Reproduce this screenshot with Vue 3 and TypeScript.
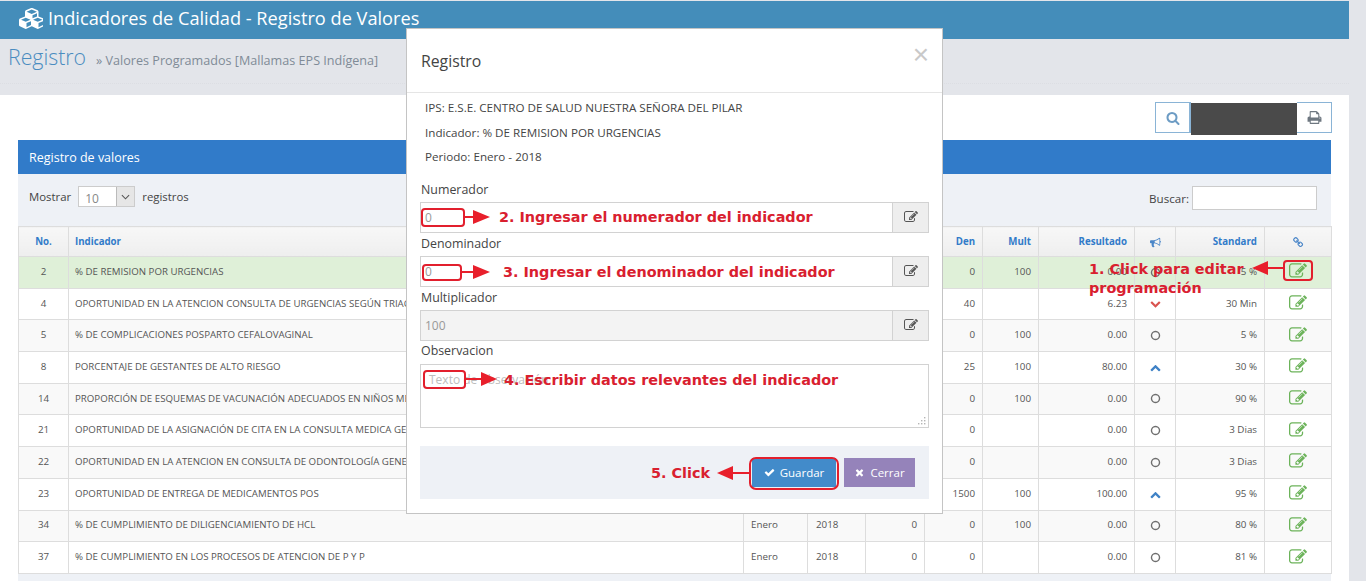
<script setup lang="ts">
interface Row {
  no: number
  name: string
  num: string
  den: string
  mult: string
  res: string
  status: 'circle' | 'up' | 'down'
  std: string
}

const paths = {
  edit: 'M888 1184l116-116-152-152-116 116v56h96v96h56zm440-720q-16-16-33 1l-350 350q-17 17-1 33t33-1l350-350q17-17 1-33zm80 594v190q0 119-84.500 203.500t-203.500 84.500h-832q-119 0-203.500-84.500t-84.500-203.500v-832q0-119 84.500-203.500t203.500-84.500h832q63 0 117 25 15 7 18 23 3 17-9 29l-49 49q-14 14-32 8-23-6-45-6h-832q-66 0-113 47t-47 113v832q0 66 47 113t113 47h832q66 0 113-47t47-113v-126q0-13 9-22l64-64q15-15 35-7t20 29zm-96-738l288 288-672 672h-288v-288zm444 132l-92 92-288-288 92-92q28-28 68-28t68 28l152 152q28 28 28 68t-28 68z',
  search: 'M1216 832q0-185-131.500-316.500t-316.500-131.500-316.500 131.500-131.500 316.500 131.500 316.500 316.500 131.500 316.500-131.500 131.500-316.500zm512 832q0 52-38 90t-90 38q-54 0-90-38l-343-342q-179 124-399 124-143 0-273.500-55.500t-225-150-150-225-55.500-273.500 55.500-273.500 150-225 225-150 273.500-55.500 273.500 55.500 225 150 150 225 55.500 273.500q0 220-124 399l343 343q37 37 37 90z',
  print: 'M448 1536h896v-256h-896v256zm0-640h896v-384h-160q-40 0-68-28t-28-68v-160h-640v640zm1152 64q0-26-19-45t-45-19-45 19-19 45 19 45 45 19 45-19 19-45zm128 0v416q0 13-9.500 22.500t-22.500 9.500h-224v160q0 40-28 68t-68 28h-960q-40 0-68-28t-28-68v-160h-224q-13 0-22.500-9.500t-9.500-22.500v-416q0-79 56.500-135.500t135.500-56.500h64v-544q0-40 28-68t68-28h672q40 0 88 20t76 48l152 152q28 28 48 76t20 88v256h64q79 0 135.500 56.500t56.500 135.500z',
  check: 'M1671 566q0 40-28 68l-724 724-136 136q-28 28-68 28t-68-28l-136-136-362-362q-28-28-28-68t28-68l136-136q28-28 68-28t68 28l294 295 656-657q28-28 68-28t68 28l136 136q28 28 28 68z',
  times: 'M1490 1322q0 40-28 68l-136 136q-28 28-68 28t-68-28l-294-294-294 294q-28 28-68 28t-68-28l-136-136q-28-28-28-68t28-68l294-294-294-294q-28-28-28-68t28-68l136-136q28-28 68-28t68 28l294 294 294-294q28-28 68-28t68 28l136 136q28 28 28 68t-28 68l-294 294 294 294q28 28 28 68z',
  up: 'M1683 1331l-166 165q-19 19-45 19t-45-19l-531-531-531 531q-19 19-45 19t-45-19l-166-165q-19-19-19-45.500t19-45.500l742-741q19-19 45-19t45 19l742 741q19 19 19 45.500t-19 45.500z',
  down: 'M1683 808l-742 741q-19 19-45 19t-45-19l-742-741q-19-19-19-45.500t19-45.500l166-165q19-19 45-19t45 19l531 531 531-531q19-19 45-19t45 19l166 165q19 19 19 45.500t-19 45.500z',
  circle: 'M896 352q-148 0-273 73t-198 198-73 273 73 273 198 198 273 73 273-73 198-198 73-273-73-273-198-198-273-73zm768 544q0 209-103 385.500t-279.500 279.500-385.500 103-385.500-103-279.500-279.500-103-385.500 103-385.500 279.500-279.500 385.500-103 385.500 103 279.500 279.500 103 385.500z',
  bullhorn: 'M1664 640q53 0 90.500 37.500t37.500 90.500-37.500 90.500-90.500 37.500v384q0 52-38 90t-90 38q-417-347-812-380-58 19-91 66t-31 100.500 40 92.500q-20 33-23 65.500t6 58 33.500 55 48 50 61.500 50.500q-29 58-111.500 83t-168.500 11.500-132-55.500q-7-23-29.500-87.500t-32-94.500-23-89-15-101 3.500-98.500 22-110.500h-122q-66 0-113-47t-47-113v-192q0-66 47-113t113-47h480q435 0 896-384 52 0 90 38t38 90v384zm-128 604v-954q-394 302-768 343v270q377 42 768 341z',
  link: 'M1456 1216q0-40-28-68l-208-208q-28-28-68-28-42 0-72 32 3 3 19 18.500t21.500 21.500 15 19 13 25.500 3.500 27.500q0 40-28 68t-68 28q-15 0-27.500-3.500t-25.500-13-19-15-21.500-21.500-18.500-19q-33 31-33 73 0 40 28 68l206 207q27 27 68 27 40 0 68-26l147-146q28-28 28-67zm-703-705q0-40-28-68l-206-207q-28-28-68-28-39 0-68 27l-147 146q-28 28-28 67 0 40 28 68l208 208q27 27 68 27 42 0 72-31-3-3-19-18.500t-21.500-21.500-15-19-13-25.500-3.500-27.500q0-40 28-68t68-28q15 0 27.500 3.500t25.500 13 19 15 21.500 21.500 18.500 19q33-31 33-73zm895 705q0 120-85 203l-147 146q-83 83-203 83-121 0-204-85l-206-207q-83-83-83-203 0-123 88-209l-88-88q-86 88-208 88-120 0-204-84l-208-208q-84-84-84-204t85-203l147-146q83-83 203-83 121 0 204 85l206 207q83 83 83 203 0 123-88 209l88 88q86-88 208-88 120 0 204 84l208 208q84 84 84 204z',
  cubes: 'M640 1632l384-192v-314l-384 164v342zm-64-454l404-173-404-173-404 173zm1088 454l384-192v-314l-384 164v342zm-64-454l404-173-404-173-404 173zm-448-293l384-165v-266l-384 164v267zm-64-379l441-189-441-189-441 189zm1088 518v416q0 36-19 67t-52 47l-448 224q-25 14-57 14t-57-14l-448-224q-4-2-7-4-2 2-7 4l-448 224q-25 14-57 14t-57-14l-448-224q-33-16-52-47t-19-67v-416q0-38 21.500-70t56.500-48l434-186v-400q0-38 21.500-70t56.500-48l448-192q23-10 50-10t50 10l448 192q35 16 56.500 48t21.500 70v400l434 186q36 16 57 48t21 70z'
}

const rows: Row[] = [
  { no: 2, name: '% DE REMISION POR URGENCIAS', num: '0', den: '0', mult: '100', res: '0.00', status: 'circle', std: '5 %' },
  { no: 4, name: 'OPORTUNIDAD EN LA ATENCION CONSULTA DE URGENCIAS SEGÚN TRIAGE', num: '249', den: '40', mult: '', res: '6.23', status: 'down', std: '30 Min' },
  { no: 5, name: '% DE COMPLICACIONES POSPARTO CEFALOVAGINAL', num: '0', den: '0', mult: '100', res: '0.00', status: 'circle', std: '5 %' },
  { no: 8, name: 'PORCENTAJE DE GESTANTES DE ALTO RIESGO', num: '20', den: '25', mult: '100', res: '80.00', status: 'up', std: '30 %' },
  { no: 14, name: 'PROPORCIÓN DE ESQUEMAS DE VACUNACIÓN ADECUADOS EN NIÑOS MENORES', num: '0', den: '0', mult: '100', res: '0.00', status: 'circle', std: '90 %' },
  { no: 21, name: 'OPORTUNIDAD DE LA ASIGNACIÓN DE CITA EN LA CONSULTA MEDICA GENERAL', num: '0', den: '0', mult: '', res: '0.00', status: 'circle', std: '3 Dias' },
  { no: 22, name: 'OPORTUNIDAD EN LA ATENCION EN CONSULTA DE ODONTOLOGÍA GENERAL', num: '0', den: '0', mult: '', res: '0.00', status: 'circle', std: '3 Dias' },
  { no: 23, name: 'OPORTUNIDAD DE ENTREGA DE MEDICAMENTOS POS', num: '1500', den: '1500', mult: '100', res: '100.00', status: 'up', std: '95 %' },
  { no: 34, name: '% DE CUMPLIMIENTO DE DILIGENCIAMIENTO DE HCL', num: '0', den: '0', mult: '100', res: '0.00', status: 'circle', std: '80 %' },
  { no: 37, name: '% DE CUMPLIMIENTO EN LOS PROCESOS DE ATENCION DE P Y P', num: '0', den: '0', mult: '', res: '0.00', status: 'circle', std: '81 %' }
]
</script>

<template>
  <div class="page">
    <div class="main">
      <header class="topbar">
        <svg class="cubes" viewBox="0 0 2048 1792"><path :d="paths.cubes" /></svg>
        <span>Indicadores de Calidad - Registro de Valores</span>
      </header>
      <div class="band">
        <div class="band-inner">
          <h1>Registro</h1>
          <span class="crumb">» Valores Programados [Mallamas EPS Indígena]</span>
        </div>
      </div>
      <section class="content">
        <div class="toolbar">
          <span class="tool tool-search"><svg viewBox="0 0 1792 1792"><path :d="paths.search" /></svg></span>
          <span class="tool-mask"></span>
          <span class="tool tool-print"><svg viewBox="0 0 1792 1792"><path :d="paths.print" /></svg></span>
        </div>
        <div class="panel">
          <div class="panel-head">Registro de valores</div>
          <div class="controls">
            <div class="length">
              <span>Mostrar</span>
              <span class="select">
                <span class="select-val">10</span>
                <span class="select-btn">
                  <svg viewBox="0 0 10 6"><path d="M1 1l4 4 4-4" /></svg>
                </span>
              </span>
              <span>registros</span>
            </div>
            <label class="find">Buscar: <input type="text" /></label>
          </div>
          <table>
            <colgroup>
              <col class="c-no" /><col class="c-name" /><col class="c-mes" /><col class="c-year" /><col class="c-num" /><col class="c-den" />
              <col class="c-mult" /><col class="c-res" /><col class="c-st" /><col class="c-std" /><col class="c-act" />
            </colgroup>
            <thead>
              <tr>
                <th class="ctr">No.</th>
                <th class="name">Indicador</th>
                <th>Mes</th>
                <th>Año</th>
                <th class="r">Num</th>
                <th class="r">Den</th>
                <th class="r">Mult</th>
                <th class="r">Resultado</th>
                <th class="ctr"><svg class="ic-h" viewBox="0 0 1792 1792"><path :d="paths.bullhorn" /></svg></th>
                <th class="r">Standard</th>
                <th class="ctr"><svg class="ic-h" viewBox="0 0 1792 1792"><path :d="paths.link" /></svg></th>
              </tr>
            </thead>
            <tbody>
              <tr v-for="(row, i) in rows" :key="row.no" :class="{ sel: i === 0, odd: i % 2 === 0 }">
                <td class="ctr">{{ row.no }}</td>
                <td class="name">{{ row.name }}</td>
                <td>Enero</td>
                <td class="year">2018</td>
                <td class="r">{{ row.num }}</td>
                <td class="r">{{ row.den }}</td>
                <td class="r">{{ row.mult }}</td>
                <td class="r">{{ row.res }}</td>
                <td class="ctr">
                  <svg class="st" :class="row.status" viewBox="0 0 1792 1792"><path :d="paths[row.status]" /></svg>
                </td>
                <td class="r">{{ row.std }}</td>
                <td class="ctr">
                  <svg class="ic-edit" viewBox="0 0 1792 1792"><path :d="paths.edit" /></svg>
                </td>
              </tr>
            </tbody>
          </table>
        </div>
      </section>
    </div>

    <!-- Modal dialog -->
    <div class="modal">
      <div class="modal-head">
        <h2>Registro</h2>
        <span class="close">×</span>
      </div>
      <div class="modal-body">
        <div class="info">
          <p>IPS: E.S.E. CENTRO DE SALUD NUESTRA SEÑORA DEL PILAR</p>
          <p>Indicador: % DE REMISION POR URGENCIAS</p>
          <p>Periodo: Enero - 2018</p>
        </div>
        <label class="lbl first">Numerador</label>
        <div class="group">
          <input class="ctl" type="text" value="0" />
          <span class="addon"><svg viewBox="0 0 1792 1792"><path :d="paths.edit" /></svg></span>
        </div>
        <label class="lbl">Denominador</label>
        <div class="group">
          <input class="ctl" type="text" value="0" />
          <span class="addon"><svg viewBox="0 0 1792 1792"><path :d="paths.edit" /></svg></span>
        </div>
        <label class="lbl">Multiplicador</label>
        <div class="group disabled">
          <input class="ctl" type="text" value="100" disabled />
          <span class="addon"><svg viewBox="0 0 1792 1792"><path :d="paths.edit" /></svg></span>
        </div>
        <label class="lbl tight">Observacion</label>
        <div class="area-wrap">
          <textarea class="area" placeholder="Texto de observación"></textarea>
          <svg class="grip" viewBox="0 0 8 8">
            <rect x="6" y="0" width="1.4" height="1.4" />
            <rect x="3" y="3" width="1.4" height="1.4" /><rect x="6" y="3" width="1.4" height="1.4" />
            <rect x="0" y="6" width="1.4" height="1.4" /><rect x="3" y="6" width="1.4" height="1.4" /><rect x="6" y="6" width="1.4" height="1.4" />
          </svg>
        </div>
        <div class="modal-foot">
          <button class="btn save" type="button">
            <svg viewBox="0 0 1792 1792"><path :d="paths.check" /></svg>Guardar
          </button>
          <button class="btn cancel" type="button">
            <svg viewBox="0 0 1792 1792"><path :d="paths.times" /></svg>Cerrar
          </button>
        </div>
      </div>
    </div>

    <!-- Red tutorial annotations drawn over the screenshot -->
    <div class="mark m-num"></div>
    <div class="mark m-den"></div>
    <div class="mark m-obs"></div>
    <div class="mark m-save"></div>
    <div class="mark m-edit"></div>
    <svg class="arrows" viewBox="0 0 1366 581">
      <path d="M465 217h10" class="ln" /><path d="M473 210l17 7-17 7z" class="hd" />
      <path d="M462 272h12" class="ln" /><path d="M473 265l17 7-17 7z" class="hd" />
      <path d="M466 379h17" class="ln" /><path d="M481 372l16 7-16 7z" class="hd" />
      <path d="M749 473h-22" class="ln" /><path d="M733 466l-16 7 16 7z" class="hd" />
      <path d="M1283 268h-20" class="ln" /><path d="M1268 261l-16 7 16 7z" class="hd" />
    </svg>
    <span class="note n2">2. Ingresar el numerador del indicador</span>
    <span class="note n3">3. Ingresar el denominador del indicador</span>
    <span class="note n4">4. Escribir datos relevantes del indicador</span>
    <span class="note n5">5. Click</span>
    <span class="note n1">1. Click para editar<br />programación</span>
  </div>
</template>

<style>
html, body { margin: 0; padding: 0; overflow: hidden; background: #e3e5ea; }
</style>

<style scoped>
.page {
  position: relative;
  width: 1366px;
  height: 581px;
  overflow: hidden;
  background: #e3e5ea;
  font-family: "Open Sans", "Liberation Sans", sans-serif;
  color: #444;
}
.main { width: 1349px; padding-top: 1px; }
.topbar {
  height: 38px;
  box-sizing: border-box;
  background: #448dba;
  color: #fff;
  display: flex;
  align-items: center;
  gap: 5px;
  padding: 0 0 4px 19px;
  font-size: 18.2px;
}
.cubes { width: 24px; height: 21px; fill: #fff; }
.band { height: 56px; background: #e3e5ea; }
.band-inner {
  height: 45px;
  border-bottom: 1px dotted #dcdee3;
  display: flex;
  align-items: baseline;
  padding-left: 8px;
  box-sizing: border-box;
}
h1 { margin: 3px 0 0; font-size: 21.3px; font-weight: 300; color: #4a8cc0; }
.crumb { margin-left: 10px; font-size: 12.6px; color: #808b97; }
.content { background: #fff; padding: 7px 18px 0; height: 486px; box-sizing: border-box; }
.toolbar { display: flex; justify-content: flex-end; height: 38px; margin-right: -1px; }
.tool {
  height: 31px;
  box-sizing: border-box;
  border: 1px solid #8ab4d6;
  display: flex;
  align-items: center;
  justify-content: center;
}
.tool svg { width: 15px; height: 15px; }
.tool-search { width: 36px; border-right-width: 2px; }
.tool-search svg { fill: #6d9cc4; width: 14px; height: 14px; }
.tool-print { width: 35px; border-left: 0; }
.tool-print svg { fill: #6e7780; }
.tool-mask { width: 106px; height: 32px; background: #4a4a4a; margin-top: 1px; }
.panel { background: #eef1f6; height: 441px; }
.panel-head {
  height: 34px;
  background: #317bc9;
  color: #fff;
  font-size: 12.5px;
  line-height: 35px;
  padding-left: 11px;
}
.controls {
  height: 52px;
  box-sizing: border-box;
  padding: 12px 14px 0 11px;
  display: flex;
  justify-content: space-between;
  align-items: flex-start;
  font-size: 11.6px;
}
.length { display: flex; align-items: center; gap: 7px; height: 21px; font-size: 11.4px; }
.select {
  width: 57px;
  height: 21px;
  box-sizing: border-box;
  border: 1px solid #ccc;
  background: #fff;
  display: flex;
  justify-content: space-between;
}
.select-val { padding: 3px 0 0 6px; color: #888; font-size: 12px; }
.select-btn {
  width: 17px;
  background: #e6e6e6;
  border-left: 1px solid #bbb;
  display: flex;
  align-items: center;
  justify-content: center;
}
.select-btn svg { width: 9px; height: 6px; fill: none; stroke: #555; stroke-width: 1.2; }
.find { display: flex; align-items: center; gap: 3px; height: 24px; }
.find input {
  width: 125px;
  height: 24px;
  box-sizing: border-box;
  border: 1px solid #ccc;
  background: #fff;
  padding: 0;
  outline: none;
}
table {
  width: 1313px;
  table-layout: fixed;
  border-collapse: collapse;
  font-size: 9.8px;
  color: #555;
}
.c-no { width: 50px; } .c-name { width: 675px; } .c-mes { width: 64px; } .c-year { width: 58px; }
.c-num { width: 59px; } .c-den { width: 58px; } .c-mult { width: 56px; } .c-res { width: 96px; }
.c-st { width: 41px; } .c-std { width: 89px; } .c-act { width: 67px; }
th, td {
  border: 1px solid #ddd;
  padding: 0 7px;
  white-space: nowrap;
  overflow: hidden;
}
th {
  height: 29px;
  color: #317bc9;
  font-weight: 700;
  font-size: 9.7px;
  text-align: left;
  background: linear-gradient(#f7f7f7, #eeeeee);
}
td { height: 31.7px; background: #fff; padding-bottom: 2px; box-sizing: border-box; }
td.name, th.name { padding-left: 6px; }
td.name { font-size: 9.7px; }
td.year { padding-left: 8px; }
tr.odd td { background: #f9f9f9; }
tr.sel td { background: #dff0d8; }
.ctr { text-align: center; }
.r { text-align: right; }
.ic-h { width: 11px; height: 11px; fill: #4a86c8; vertical-align: middle; }
.st { width: 11px; height: 11px; vertical-align: middle; }
.st.circle { fill: #6f6f6f; }
.st.up { fill: #3f82c6; }
.st.down { fill: #d9534f; }
.ic-edit { width: 18px; height: 18px; fill: #6cb35a; vertical-align: middle; }

.modal {
  position: absolute;
  left: 406px;
  top: 28px;
  width: 537px;
  height: 486px;
  box-sizing: border-box;
  background: #fff;
  border: 1px solid #c4c4c4;
}
.modal-head {
  height: 64px;
  box-sizing: border-box;
  border-bottom: 1px solid #e5e5e5;
  padding: 21px 14px 0;
  position: relative;
}
h2 { margin: 0; font-size: 15.8px; font-weight: 400; color: #444; line-height: 22px; }
.close {
  position: absolute;
  right: 13px;
  top: 10px;
  font-family: "Liberation Sans", sans-serif;
  font-size: 28px;
  line-height: 32px;
  color: #c9c9c9;
}
.modal-body { padding: 0 13px; }
.info { padding: 3px 5px 0; font-size: 11.65px; color: #444; }
.info p { margin: 0; height: 24.5px; line-height: 24.5px; }
.lbl { display: block; font-size: 12.4px; line-height: 17px; height: 23px; padding: 2px 0 0 1px; box-sizing: border-box; color: #444; }
.lbl.first { margin-top: 10px; height: 22px; padding-top: 1px; }
.lbl.tight { padding-top: 1px; }
.group { display: flex; height: 31px; box-sizing: border-box; border: 1px solid #d2d2d2; }
.ctl {
  flex: 1;
  min-width: 0;
  border: 0;
  padding: 0 4px;
  font-family: "Open Sans", sans-serif;
  font-size: 12px;
  color: #999;
  background: #fff;
  outline: none;
}
.group.disabled .ctl { background: #f3f3f3; color: #999; }
.addon {
  width: 35px;
  background: #eeeeee;
  border-left: 1px solid #d2d2d2;
  display: flex;
  align-items: center;
  justify-content: center;
}
.addon svg { width: 14px; height: 14px; fill: #555; }
.area-wrap { position: relative; width: 509px; height: 64px; }
.area {
  display: block;
  width: 509px;
  height: 64px;
  box-sizing: border-box;
  border: 1px solid #d2d2d2;
  padding: 6px 8px;
  margin: 0;
  font-family: "Open Sans", sans-serif;
  font-size: 12px;
  outline: none;
  resize: none;
}
.area::placeholder { color: #bdbdbd; }
.grip { position: absolute; right: 3px; bottom: 3px; width: 8px; height: 8px; fill: #b5b5b5; }
.modal-foot {
  margin-top: 18px;
  height: 53px;
  width: 509px;
  box-sizing: border-box;
  background: #eef1f6;
  display: flex;
  justify-content: flex-end;
  gap: 8px;
  padding: 12px 14px 0 0;
}
.btn {
  height: 29px;
  border: 0;
  color: #fff;
  font-family: "Open Sans", sans-serif;
  font-size: 11.5px;
  display: flex;
  align-items: center;
  justify-content: center;
  gap: 5px;
  padding: 0;
}
.btn svg { width: 11px; height: 11px; fill: #fff; }
.save { width: 84px; background: #428bca; }
.cancel { width: 71px; background: #9583ba; }

.mark { position: absolute; box-sizing: border-box; border: 2px solid #e21f2d; border-radius: 4px; }
.m-num { left: 421px; top: 208px; width: 44px; height: 19px; }
.m-den { left: 422px; top: 264px; width: 40px; height: 17px; }
.m-obs { left: 423px; top: 370px; width: 43px; height: 19px; }
.m-save { left: 749px; top: 457px; width: 90px; height: 33px; border-radius: 7px; }
.m-edit { left: 1283px; top: 260px; width: 30px; height: 21px; }
.arrows { position: absolute; left: 0; top: 0; width: 1366px; height: 581px; pointer-events: none; }
.ln { stroke: #e81f2b; stroke-width: 2; fill: none; }
.hd { fill: #e81f2b; }
.note {
  position: absolute;
  font-family: "DejaVu Sans", sans-serif;
  font-weight: 700;
  font-size: 14.4px;
  line-height: 19px;
  color: #d9202f;
  white-space: nowrap;
}
.n1 { left: 1089px; top: 260px; }
.n2 { left: 499px; top: 208px; }
.n3 { left: 503px; top: 263px; }
.n4 { left: 504px; top: 371px; }
.n5 { left: 651px; top: 464px; }
</style>
